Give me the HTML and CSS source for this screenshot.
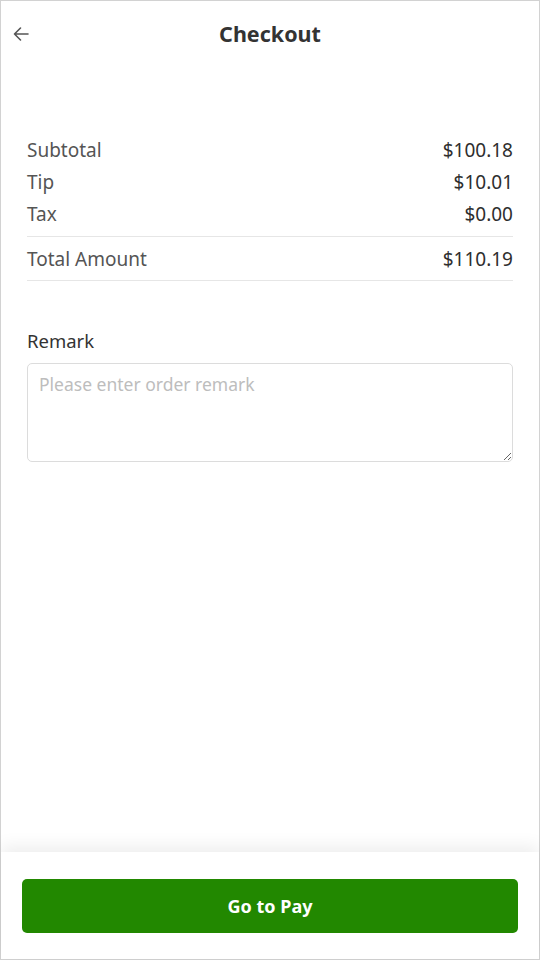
FILE: index.html
```html
<!DOCTYPE html>
<html>
<head>
<meta charset="utf-8">
<link rel="stylesheet" href="styles.css">
</head>
<body>
<div class="page">
  <header class="header">
    <svg class="back" width="20" height="20" viewBox="0 0 20 20"><path d="M17 10H3.5M9.5 4L3.5 10L9.5 16" fill="none" stroke="#555" stroke-width="1.6" stroke-linecap="round" stroke-linejoin="round"/></svg>
    <h1 class="title">Checkout</h1>
  </header>
  <main class="content">
    <section class="summary">
      <div class="group">
        <div class="row"><span class="label">Subtotal</span><span class="value">$100.18</span></div>
        <div class="row"><span class="label">Tip</span><span class="value">$10.01</span></div>
        <div class="row"><span class="label">Tax</span><span class="value">$0.00</span></div>
      </div>
      <div class="row total"><span class="label">Total Amount</span><span class="value">$110.19</span></div>
    </section>
    <section class="remark">
      <div class="remark-label">Remark</div>
      <textarea class="remark-input" placeholder="Please enter order remark"></textarea>
    </section>
  </main>
  <footer class="footer">
    <button class="pay">Go to Pay</button>
  </footer>
</div>
</body>
</html>
```
FILE: styles.css
```css
* { box-sizing: border-box; }
html, body { margin: 0; padding: 0; }
body {
  font-family: "Noto Sans", "Open Sans", sans-serif;
  background: #fff;
  color: #333;
}
.page {
  width: 540px;
  height: 960px;
  border: 1px solid #d2d2d2;
  display: flex;
  flex-direction: column;
}
.header {
  position: relative;
  height: 67px;
  display: flex;
  align-items: center;
  justify-content: center;
  padding-bottom: 2px;
}
.back {
  position: absolute;
  left: 10px;
  top: 23px;
}
.title {
  margin: 0;
  font-size: 21.5px;
  font-weight: 700;
  color: #333;
}
.content {
  padding: 0 26px;
  flex: 1;
}
.summary {
  margin-top: 66px;
}
.group {
  padding-bottom: 6px;
  border-bottom: 1px solid #e6e6e6;
}
.row {
  display: flex;
  justify-content: space-between;
  font-size: 19px;
  line-height: 32px;
}
.label { color: #555; }
.value { color: #2e2e2e; }
.total {
  padding: 6px 0 5px;
  border-bottom: 1px solid #e6e6e6;
}
.remark {
  margin-top: 48px;
}
.remark-label {
  font-size: 18.5px;
  line-height: 24px;
  color: #333;
}
.remark-input {
  display: block;
  margin-top: 10px;
  width: 100%;
  height: 99px;
  border: 1px solid #dcdcdc;
  border-radius: 5px;
  padding: 8px 11px;
  font-family: "Noto Sans", "Open Sans", sans-serif;
  font-size: 17.5px;
  color: #333;
  outline: none;
}
.remark-input::placeholder { color: #bdbdbd; }
.footer {
  height: 107px;
  padding: 27px 21px 26px 21px;
  box-shadow: 0 -6px 16px rgba(0,0,0,0.07);
  background: #fff;
}
.pay {
  width: 100%;
  height: 54px;
  border: none;
  border-radius: 5px;
  background: #228800;
  color: #fff;
  font-family: "Noto Sans", "Open Sans", sans-serif;
  font-size: 18px;
  font-weight: 700;
}
```
